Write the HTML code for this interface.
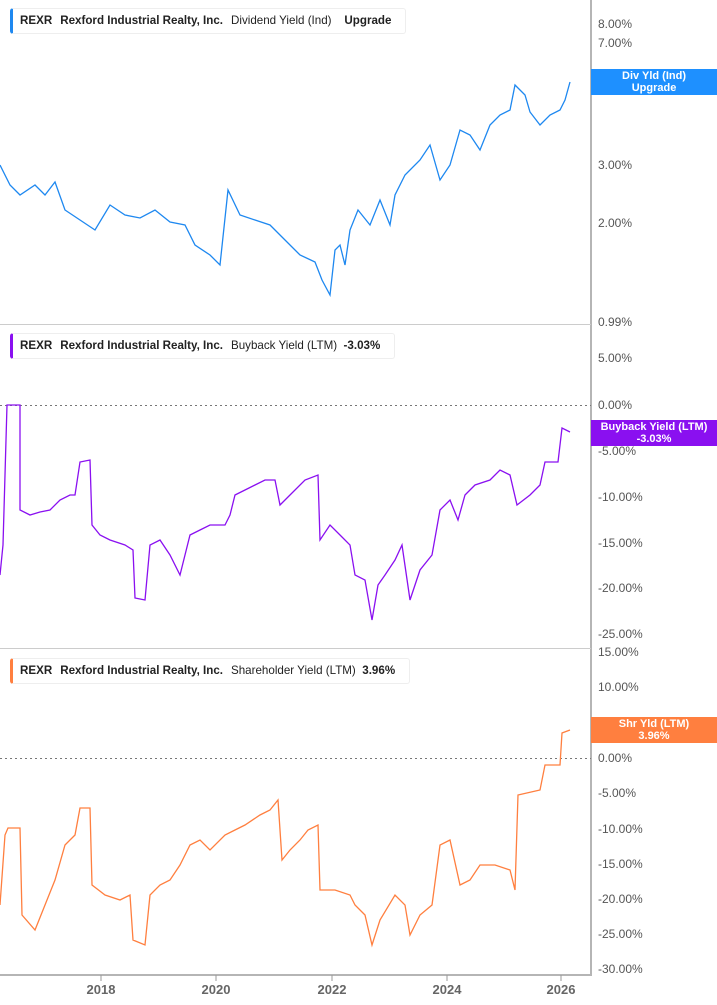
<!DOCTYPE html>
<html><head><style>
body{margin:0;width:717px;height:1005px;background:#fff;position:relative;overflow:hidden;font-family:"Liberation Sans",sans-serif}
.lg{position:absolute;left:10px;height:24px;border:1px solid #eee;border-left:3px solid;border-radius:3px;background:#fff;font-size:11.6px;color:#222;line-height:24px;padding:0 6px 0 7px;white-space:nowrap}
.lg b{margin-right:8px}
.t{position:absolute;left:598px;font-size:12px;color:#555;transform:translateY(-50%)}
.lab{position:absolute;left:591px;width:126px;height:26px;color:#fff;font-size:11px;font-weight:bold;text-align:center;line-height:12px;padding-top:1px;box-sizing:border-box}
.yr{position:absolute;top:982px;font-size:13px;font-weight:bold;color:#666;transform:translateX(-50%)}
</style></head><body>
<svg width="717" height="1005" style="position:absolute;left:0;top:0">
<g stroke="#b5b5b5" stroke-width="2"><line x1="591" y1="0" x2="591" y2="976"/><line x1="0" y1="975" x2="591" y2="975"/></g>
<g stroke="#ccc" stroke-width="1"><line x1="0" y1="324.5" x2="591" y2="324.5"/><line x1="0" y1="648.5" x2="591" y2="648.5"/></g>
<g stroke="#777" stroke-dasharray="2,3"><line x1="0" y1="405.5" x2="591" y2="405.5"/><line x1="0" y1="758.5" x2="591" y2="758.5"/></g>
<g stroke="#999"><line x1="101" y1="975" x2="101" y2="981"/><line x1="216" y1="975" x2="216" y2="981"/><line x1="332" y1="975" x2="332" y2="981"/><line x1="447" y1="975" x2="447" y2="981"/><line x1="561" y1="975" x2="561" y2="981"/></g>
<polyline fill="none" stroke="#1e88f0" stroke-width="1.3" points="0,165 10,185 20,195 35,185 45,195 55,182 65,210 80,220 95,230 110,205 125,215 140,218 155,210 170,222 185,225 195,245 210,255 220,265 228,190 240,215 255,220 270,225 285,240 300,255 315,262 322,280 330,295 335,250 340,245 345,265 350,230 358,210 370,225 380,200 390,225 395,195 405,175 420,160 430,145 440,180 450,165 460,130 470,135 480,150 490,125 500,115 510,110 515,85 525,95 530,112 540,125 550,115 560,110 565,100 570,82"/>
<polyline fill="none" stroke="#8a10f0" stroke-width="1.3" points="0,575 3,545 7,405 20,405 20,510 30,515 40,512 50,510 60,500 70,495 75,495 80,462 90,460 92,525 100,535 110,540 125,545 133,550 135,598 145,600 150,545 160,540 170,555 180,575 190,535 200,530 210,525 225,525 230,515 235,495 245,490 255,485 265,480 275,480 280,505 290,495 305,480 318,475 320,540 330,525 340,535 350,545 355,575 365,580 372,620 378,585 385,575 395,560 402,545 410,600 420,570 432,555 440,510 450,500 458,520 465,495 475,485 490,480 500,470 510,475 517,505 530,495 540,485 545,462 558,462 562,428 570,432"/>
<polyline fill="none" stroke="#ff7f3f" stroke-width="1.3" points="0,905 5,835 8,828 20,828 22,915 35,930 45,905 55,880 65,845 75,835 80,808 90,808 92,885 105,895 120,900 130,895 133,940 145,945 150,895 160,885 170,880 180,865 190,845 200,840 210,850 225,835 235,830 245,825 260,815 270,810 278,800 282,860 290,850 300,840 308,830 318,825 320,890 335,890 350,895 355,905 365,915 372,945 380,920 395,895 405,905 410,935 420,915 432,905 440,845 450,840 460,885 470,880 480,865 495,865 510,870 515,890 518,795 540,790 545,765 560,765 562,733 570,730"/>
</svg>
<div class="lg" style="top:8px;border-left-color:#1e88f0"><b>REXR</b><b>Rexford Industrial Realty, Inc.</b>Dividend Yield (Ind) &nbsp;&nbsp;&nbsp;<b>Upgrade</b></div>
<div class="lg" style="top:333px;border-left-color:#8a10f0"><b>REXR</b><b>Rexford Industrial Realty, Inc.</b>Buyback Yield (LTM) &nbsp;<b>-3.03%</b></div>
<div class="lg" style="top:658px;border-left-color:#ff7f3f"><b>REXR</b><b>Rexford Industrial Realty, Inc.</b>Shareholder Yield (LTM) &nbsp;<b>3.96%</b></div>
<div class="t" style="top:24px">8.00%</div><div class="t" style="top:43px">7.00%</div><div class="t" style="top:165px">3.00%</div><div class="t" style="top:223px">2.00%</div><div class="t" style="top:322px">0.99%</div>
<div class="t" style="top:358px">5.00%</div><div class="t" style="top:405px">0.00%</div><div class="t" style="top:451px">-5.00%</div><div class="t" style="top:497px">-10.00%</div><div class="t" style="top:543px">-15.00%</div><div class="t" style="top:588px">-20.00%</div><div class="t" style="top:634px">-25.00%</div>
<div class="t" style="top:652px">15.00%</div><div class="t" style="top:687px">10.00%</div><div class="t" style="top:758px">0.00%</div><div class="t" style="top:793px">-5.00%</div><div class="t" style="top:829px">-10.00%</div><div class="t" style="top:864px">-15.00%</div><div class="t" style="top:899px">-20.00%</div><div class="t" style="top:934px">-25.00%</div><div class="t" style="top:969px">-30.00%</div>
<div class="lab" style="top:69px;background:#1e90ff">Div Yld (Ind)<br>Upgrade</div>
<div class="lab" style="top:420px;background:#8a10f0">Buyback Yield (LTM)<br>-3.03%</div>
<div class="lab" style="top:717px;background:#ff7f3f">Shr Yld (LTM)<br>3.96%</div>
<div class="yr" style="left:101px">2018</div><div class="yr" style="left:216px">2020</div><div class="yr" style="left:332px">2022</div><div class="yr" style="left:447px">2024</div><div class="yr" style="left:561px">2026</div>
</body></html>
